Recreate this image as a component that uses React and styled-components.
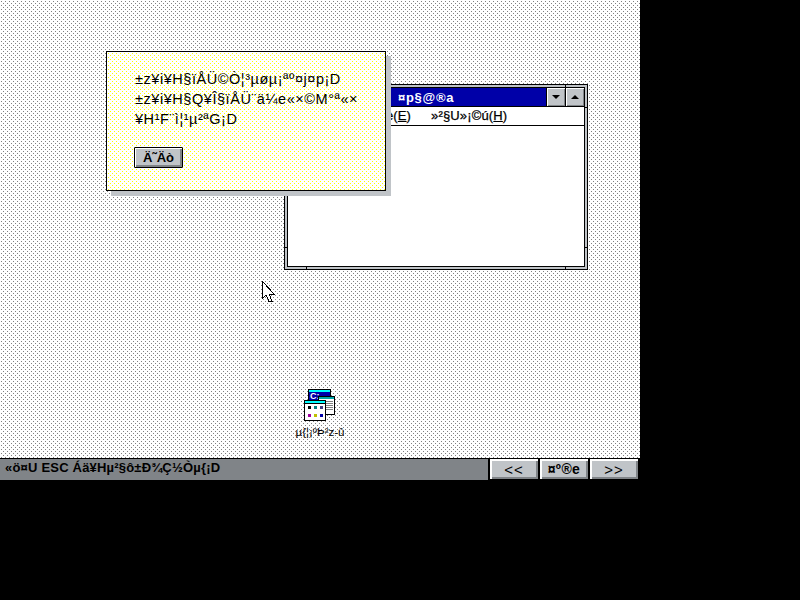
import React from 'react'
import styled, { createGlobalStyle, css } from 'styled-components'

const GlobalStyle = createGlobalStyle`
  html, body {
    margin: 0;
    height: 100%;
    background: #000;
  }
`

const dither = (color, offset = 0) => css`
  background-color: #fff;
  background-image:
    conic-gradient(at 1px 1px, transparent 75%, ${color} 0),
    conic-gradient(at 1px 1px, transparent 75%, ${color} 0);
  background-size: 4px 4px;
  background-position: ${offset}px ${offset}px, ${offset + 2}px ${offset + 2}px;
`

const Screen = styled.div`
  width: 640px;
  height: 480px;
  display: flex;
  flex-direction: column;
  font-family: "Liberation Sans", Arial, sans-serif;
  color: #000;
`

const Desktop = styled.div`
  position: relative;
  flex: 1;
  ${dither('#808080', 1)}
`

const Window = styled.div`
  position: absolute;
  left: 284px;
  top: 84px;
  width: 304px;
  height: 186px;
  box-sizing: border-box;
  border: 1px solid #000;
  padding: 2px;
  background: #c0c4c8;
`

const WindowInner = styled.div`
  height: 100%;
  box-sizing: border-box;
  border: 1px solid #000;
  background: #fff;
  display: flex;
  flex-direction: column;
`

const Tick = styled.span`
  position: absolute;
  background: #000;
  ${p => p.$side === 'top' && css`top: 0; left: ${p.$at}px; width: 1px; height: 3px;`}
  ${p => p.$side === 'bottom' && css`bottom: 0; left: ${p.$at}px; width: 1px; height: 3px;`}
  ${p => p.$side === 'left' && css`left: 0; top: ${p.$at}px; width: 3px; height: 1px;`}
  ${p => p.$side === 'right' && css`right: 0; top: ${p.$at}px; width: 3px; height: 1px;`}
`

const TitleBar = styled.div`
  height: 18px;
  flex: none;
  display: flex;
  background: #0000a8;
  border-bottom: 1px solid #000;
`

const TitleText = styled.div`
  flex: 1;
  padding-left: 110px;
  color: #fff;
  font-size: 13px;
  font-weight: 700;
  line-height: 19px;
  letter-spacing: 0.7px;
`

const SizeButton = styled.button`
  width: 19px;
  height: 18px;
  padding: 0;
  box-sizing: border-box;
  border: 0;
  border-left: 1px solid #000;
  background: #c0c4c8;
  box-shadow: inset 1px 1px 0 #fff, inset -1px -1px 0 #808488;
  display: flex;
  align-items: center;
  justify-content: center;
`

const Arrow = styled.span`
  width: 0;
  height: 0;
  border-left: 4px solid transparent;
  border-right: 4px solid transparent;
  ${p => (p.$up ? 'border-bottom: 4px solid #000;' : 'border-top: 4px solid #000;')}
`

const MenuBar = styled.div`
  height: 18px;
  flex: none;
  display: flex;
  gap: 20px;
  border-bottom: 1px solid #000;
  font-size: 13px;
  line-height: 18px;
  letter-spacing: 0.15px;
  -webkit-text-stroke: 0.25px #000;
`

const MenuItem = styled.span`
  white-space: pre;
  u { text-decoration: underline; }
`

const Dialog = styled.div`
  position: absolute;
  left: 106px;
  top: 51px;
  width: 280px;
  height: 140px;
  box-sizing: border-box;
  border: 1px solid #000;
  box-shadow: 5px 5px 0 #c0c4c8;
  padding: 17px 27px;
  display: flex;
  flex-direction: column;
  align-items: flex-start;
  ${dither('#ffff00', 1)}
`

const Message = styled.div`
  padding-left: 1px;
  font-size: 14.5px;
  line-height: 20px;
  letter-spacing: 0.55px;
  white-space: pre;
`

const OkButton = styled.button`
  margin-top: 18px;
  width: 49px;
  height: 21px;
  padding: 0;
  box-sizing: border-box;
  border: 1px solid #000;
  border-radius: 1px;
  background: #c0c4c8;
  box-shadow: inset 1px 1px 0 #fff, inset -2px -2px 0 #808488;
  font-family: inherit;
  font-size: 13px;
  font-weight: 700;
  line-height: 17px;
  color: #000;
`

const ProgramIcon = styled.div`
  position: absolute;
  left: 290px;
  top: 389px;
  width: 60px;
  display: flex;
  flex-direction: column;
  align-items: center;
  gap: 4px;
`

const IconLabel = styled.div`
  font-size: 11.5px;
  line-height: 14px;
  white-space: pre;
`

const Pointer = styled.svg`
  position: absolute;
  left: 262px;
  top: 281px;
  display: block;
`

const StatusBar = styled.div`
  height: 22px;
  flex: none;
  display: flex;
  box-sizing: border-box;
  border-top: 1px solid #000;
  background: #808488;
`

const StatusText = styled.div`
  flex: 1;
  padding-left: 5px;
  font-size: 13px;
  font-weight: 700;
  line-height: 18px;
  letter-spacing: 0.2px;
`

const NavGroup = styled.div`
  display: flex;
  gap: 2px;
  padding: 0 2px 1px;
  background: #000;
`

const NavButton = styled.button`
  width: 48px;
  height: 20px;
  padding: 0;
  border: 0;
  background: #c0c4c8;
  box-shadow: inset 2px 2px 0 #fff, inset -2px -2px 0 #808488;
  font-family: inherit;
  color: #000;
  ${p => (p.$arrows
    ? css`font-size: 15px; letter-spacing: 1px;`
    : css`font-size: 14px; font-weight: 700; letter-spacing: 0.4px;`)}
`

function ProgramManagerGlyph() {
  return (
    <svg width="32" height="32" viewBox="0 0 32 32" shapeRendering="crispEdges">
      <rect x="4" y="0" width="23" height="16" fill="#000" />
      <rect x="5" y="1" width="21" height="2" fill="#00ffff" />
      <rect x="5" y="3" width="21" height="12" fill="#0000a8" />
      <text x="6" y="10" fontFamily="Liberation Sans" fontSize="9" fontWeight="700" fill="#fff">C:</text>

      <rect x="14" y="7" width="17" height="19" fill="#000" />
      <rect x="15" y="8" width="15" height="2" fill="#00a8a8" />
      <rect x="15" y="10" width="15" height="15" fill="#fff" />
      <rect x="22" y="12" width="7" height="1" fill="#808080" />
      <rect x="22" y="14" width="7" height="1" fill="#808080" />
      <rect x="22" y="16" width="7" height="1" fill="#808080" />
      <rect x="22" y="18" width="7" height="1" fill="#808080" />
      <rect x="22" y="20" width="7" height="1" fill="#808080" />

      <rect x="0" y="11" width="22" height="21" fill="#000" />
      <rect x="1" y="12" width="20" height="2" fill="#00ffff" />
      <rect x="1" y="14" width="20" height="1" fill="#000" />
      <rect x="1" y="15" width="20" height="16" fill="#fff" />
      <rect x="4" y="17" width="3" height="3" fill="#000" />
      <rect x="10" y="17" width="3" height="3" fill="#008080" />
      <rect x="16" y="17" width="3" height="3" fill="#404080" />
      <rect x="4" y="25" width="3" height="3" fill="#a000a0" />
      <rect x="10" y="25" width="3" height="3" fill="#c0c000" />
      <rect x="16" y="25" width="3" height="3" fill="#0000a8" />
    </svg>
  )
}

function App() {
  return (
    <Screen>
      <GlobalStyle />
      <Desktop>
        <Window>
          <Tick $side="top" $at={21} />
          <Tick $side="top" $at={280} />
          <Tick $side="bottom" $at={21} />
          <Tick $side="bottom" $at={280} />
          <Tick $side="left" $at={22} />
          <Tick $side="left" $at={162} />
          <Tick $side="right" $at={22} />
          <Tick $side="right" $at={162} />
          <WindowInner>
            <TitleBar>
              <TitleText>¤p§@®a</TitleText>
              <SizeButton><Arrow /></SizeButton>
              <SizeButton><Arrow $up /></SizeButton>
            </TitleBar>
            <MenuBar>
              <MenuItem>ÀÉ®×(<u>F</u>)</MenuItem>
              <MenuItem>½s¿è(<u>E</u>)</MenuItem>
              <MenuItem>»²§U»¡©ú(<u>H</u>)</MenuItem>
            </MenuBar>
          </WindowInner>
        </Window>

        <Dialog>
          <Message>
            {'±z¥i¥H§ïÅÜ©Ò¦³µøµ¡ªº¤j¤p¡D\n±z¥i¥H§Q¥Î§ïÅÜ¨ä¼e«×©M°ª«×\n¥H¹F¨ì¦¹µ²ªG¡D'}
          </Message>
          <OkButton>Ä˜Äò</OkButton>
        </Dialog>

        <Pointer width="14" height="21" viewBox="0 0 14 21" shapeRendering="crispEdges">
          <path d="M0.5 0.5V17.5L4 14L7 20.5H10L7.5 13.5H12.5Z" fill="#fff" stroke="#000" />
        </Pointer>

        <ProgramIcon>
          <ProgramManagerGlyph />
          <IconLabel>µ{'{'}¦¡ºÞ²z-û</IconLabel>
        </ProgramIcon>
      </Desktop>

      <StatusBar>
        <StatusText>«ö¤U ESC Áä¥Hµ²§ô±Ð¾Ç½Òµ{'{'}¡D</StatusText>
        <NavGroup>
          <NavButton $arrows>{'<<'}</NavButton>
          <NavButton>¤º®e</NavButton>
          <NavButton $arrows>{'>>'}</NavButton>
        </NavGroup>
      </StatusBar>
    </Screen>
  )
}

export default App
